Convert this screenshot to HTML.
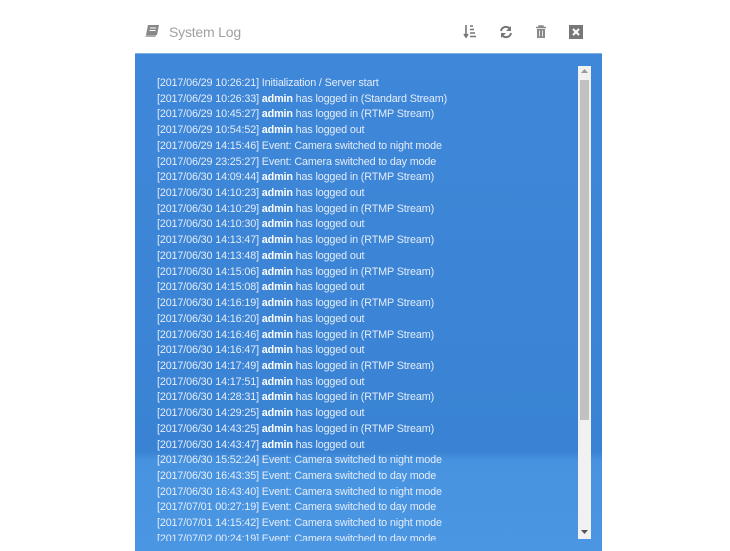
<!DOCTYPE html>
<html><head><meta charset="utf-8">
<style>
html,body{margin:0;padding:0;background:#fff;width:730px;height:550px;overflow:hidden;font-family:"Liberation Sans",sans-serif;}
.hdr{position:absolute;left:135px;top:14px;width:467px;height:38px;}
.title{position:absolute;left:34px;top:10px;font-size:14px;color:#a0a0a0;letter-spacing:-0.2px;}
.panel{position:absolute;left:135px;top:53px;width:467px;height:497px;background:linear-gradient(180deg,#3f87d8 0%,#3a83d4 80%,#4893e0 82%,#4a96e2 100%);border-top:1px solid #7fb0e6;}
.log{position:absolute;left:22px;top:21px;width:420px;height:465px;overflow:hidden;font-size:10.8px;letter-spacing:-0.15px;line-height:15.72px;color:#e4edf9;white-space:nowrap;padding-top:1px;}
.log b{color:#fff;}
.sb{position:absolute;left:443px;top:12px;width:13px;height:473px;background:#f1f1f1;}
.thumb{position:absolute;left:2px;top:14px;width:9px;height:340px;background:#c1c1c1;}
</style></head><body>
<div class="hdr">
<svg style="position:absolute;left:10px;top:10px" width="16" height="14" viewBox="0 0 16 14"><path d="M3 1h11l-2 10H1z" fill="#888"/><path d="M1 11h10l-0.5 2H0.5z" fill="#aaa"/><path d="M5 4h6M4.5 6.5h6" stroke="#fff" stroke-width="1"/></svg>
<div class="title">System Log</div>
<svg style="position:absolute;left:328px;top:10px" width="14" height="16" viewBox="0 0 14 16"><path d="M3 1v12M1 10l2 3 2-3" stroke="#777" stroke-width="1.6" fill="none"/><path d="M7 2h3M7 5.5h4M7 9h5M7 12.5h6" stroke="#777" stroke-width="1.5"/></svg>
<svg style="position:absolute;left:364px;top:11px" width="14" height="14" viewBox="0 0 14 14"><path d="M2 6a5 5 0 0 1 9-2M12 8a5 5 0 0 1-9 2" stroke="#777" stroke-width="2" fill="none"/><path d="M12 1v5H7zM2 13V8h5z" fill="#777"/></svg>
<svg style="position:absolute;left:400px;top:11px" width="12" height="14" viewBox="0 0 12 14"><path d="M1 2.5h10M4 2.5V1h4v1.5" stroke="#888" stroke-width="1.4" fill="none"/><rect x="2" y="4" width="8" height="9" fill="#888"/><path d="M4.5 5.5v6M7.5 5.5v6" stroke="#fff" stroke-width="0.8"/></svg>
<svg style="position:absolute;left:434px;top:11px" width="14" height="14" viewBox="0 0 14 14"><rect width="14" height="14" fill="#777"/><path d="M4 4l6 6M10 4l-6 6" stroke="#fff" stroke-width="2"/></svg>
</div>
<div class="panel">
<div class="log">
[2017/06/29 10:26:21] Initialization / Server start<br>
[2017/06/29 10:26:33] <b>admin</b> has logged in (Standard Stream)<br>
[2017/06/29 10:45:27] <b>admin</b> has logged in (RTMP Stream)<br>
[2017/06/29 10:54:52] <b>admin</b> has logged out<br>
[2017/06/29 14:15:46] Event: Camera switched to night mode<br>
[2017/06/29 23:25:27] Event: Camera switched to day mode<br>
[2017/06/30 14:09:44] <b>admin</b> has logged in (RTMP Stream)<br>
[2017/06/30 14:10:23] <b>admin</b> has logged out<br>
[2017/06/30 14:10:29] <b>admin</b> has logged in (RTMP Stream)<br>
[2017/06/30 14:10:30] <b>admin</b> has logged out<br>
[2017/06/30 14:13:47] <b>admin</b> has logged in (RTMP Stream)<br>
[2017/06/30 14:13:48] <b>admin</b> has logged out<br>
[2017/06/30 14:15:06] <b>admin</b> has logged in (RTMP Stream)<br>
[2017/06/30 14:15:08] <b>admin</b> has logged out<br>
[2017/06/30 14:16:19] <b>admin</b> has logged in (RTMP Stream)<br>
[2017/06/30 14:16:20] <b>admin</b> has logged out<br>
[2017/06/30 14:16:46] <b>admin</b> has logged in (RTMP Stream)<br>
[2017/06/30 14:16:47] <b>admin</b> has logged out<br>
[2017/06/30 14:17:49] <b>admin</b> has logged in (RTMP Stream)<br>
[2017/06/30 14:17:51] <b>admin</b> has logged out<br>
[2017/06/30 14:28:31] <b>admin</b> has logged in (RTMP Stream)<br>
[2017/06/30 14:29:25] <b>admin</b> has logged out<br>
[2017/06/30 14:43:25] <b>admin</b> has logged in (RTMP Stream)<br>
[2017/06/30 14:43:47] <b>admin</b> has logged out<br>
[2017/06/30 15:52:24] Event: Camera switched to night mode<br>
[2017/06/30 16:43:35] Event: Camera switched to day mode<br>
[2017/06/30 16:43:40] Event: Camera switched to night mode<br>
[2017/07/01 00:27:19] Event: Camera switched to day mode<br>
[2017/07/01 14:15:42] Event: Camera switched to night mode<br>
[2017/07/02 00:24:19] Event: Camera switched to day mode<br>
</div>
<div class="sb"><div class="thumb"></div>
<svg style="position:absolute;left:3px;top:3px" width="7" height="5" viewBox="0 0 7 5"><path d="M0 4h7L3.5 0z" fill="#999"/></svg>
<svg style="position:absolute;left:3px;top:464px" width="7" height="5" viewBox="0 0 7 5"><path d="M0 0h7L3.5 4z" fill="#555"/></svg>
</div>
</div>
</body></html>
